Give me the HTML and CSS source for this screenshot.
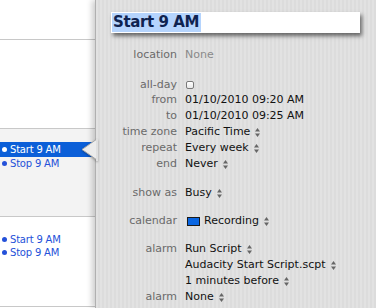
FILE: index.html
```html
<!DOCTYPE html>
<html>
<head>
<meta charset="utf-8">
<link rel="stylesheet" href="styles.css">
</head>
<body>
<div class="screen">
  <div class="cal">
    <div class="day day-a"></div>
    <div class="day day-b"></div>
    <div class="day day-c">
      <div class="ev ev-sel"><span class="dot"></span>Start 9 AM</div>
      <div class="ev"><span class="dot"></span>Stop 9 AM</div>
    </div>
    <div class="day day-d">
      <div class="ev"><span class="dot"></span>Start 9 AM</div>
      <div class="ev"><span class="dot"></span>Stop 9 AM</div>
    </div>
  </div>
  <div class="panel">
    <svg class="pointer" width="18" height="26" viewBox="0 0 18 26">
      <polygon points="17,0 2,10.5 17,21" fill="#ececec" stroke="#a9a9a9" stroke-width="1"/>
      <rect x="16" y="0" width="2" height="22" fill="#e0e0e0"/>
    </svg>
    <div class="title"><span class="sel">Start 9 AM</span></div>
    <div class="rows">
      <div class="row r-location"><span class="lab">location</span><span class="val none">None</span></div>
      <div class="row r-allday"><span class="lab">all-day</span><span class="val"><span class="check"></span></span></div>
      <div class="row"><span class="lab">from</span><span class="val">01/10/2010 09:20 AM</span></div>
      <div class="row"><span class="lab">to</span><span class="val">01/10/2010 09:25 AM</span></div>
      <div class="row"><span class="lab">time zone</span><span class="val">Pacific Time<svg class="pop" width="5" height="9" viewBox="0 0 5 9"><polygon points="0,3.5 2.5,0 5,3.5" fill="#666"/><polygon points="0,5.5 2.5,9 5,5.5" fill="#666"/></svg></span></div>
      <div class="row"><span class="lab">repeat</span><span class="val">Every week<svg class="pop" width="5" height="9" viewBox="0 0 5 9"><polygon points="0,3.5 2.5,0 5,3.5" fill="#666"/><polygon points="0,5.5 2.5,9 5,5.5" fill="#666"/></svg></span></div>
      <div class="row"><span class="lab">end</span><span class="val">Never<svg class="pop" width="5" height="9" viewBox="0 0 5 9"><polygon points="0,3.5 2.5,0 5,3.5" fill="#666"/><polygon points="0,5.5 2.5,9 5,5.5" fill="#666"/></svg></span></div>
      <div class="row r-showas"><span class="lab">show as</span><span class="val">Busy<svg class="pop" width="5" height="9" viewBox="0 0 5 9"><polygon points="0,3.5 2.5,0 5,3.5" fill="#666"/><polygon points="0,5.5 2.5,9 5,5.5" fill="#666"/></svg></span></div>
      <div class="row r-cal"><span class="lab">calendar</span><span class="val"><span class="swatch"></span>Recording<svg class="pop" width="5" height="9" viewBox="0 0 5 9"><polygon points="0,3.5 2.5,0 5,3.5" fill="#666"/><polygon points="0,5.5 2.5,9 5,5.5" fill="#666"/></svg></span></div>
      <div class="row r-alarm"><span class="lab">alarm</span><span class="val">Run Script<svg class="pop" width="5" height="9" viewBox="0 0 5 9"><polygon points="0,3.5 2.5,0 5,3.5" fill="#666"/><polygon points="0,5.5 2.5,9 5,5.5" fill="#666"/></svg></span></div>
      <div class="row"><span class="lab"></span><span class="val">Audacity Start Script.scpt<svg class="pop" width="5" height="9" viewBox="0 0 5 9"><polygon points="0,3.5 2.5,0 5,3.5" fill="#666"/><polygon points="0,5.5 2.5,9 5,5.5" fill="#666"/></svg></span></div>
      <div class="row"><span class="lab"></span><span class="val">1 minutes before<svg class="pop" width="5" height="9" viewBox="0 0 5 9"><polygon points="0,3.5 2.5,0 5,3.5" fill="#666"/><polygon points="0,5.5 2.5,9 5,5.5" fill="#666"/></svg></span></div>
      <div class="row"><span class="lab">alarm</span><span class="val">None<svg class="pop" width="5" height="9" viewBox="0 0 5 9"><polygon points="0,3.5 2.5,0 5,3.5" fill="#666"/><polygon points="0,5.5 2.5,9 5,5.5" fill="#666"/></svg></span></div>
    </div>
  </div>
</div>
</body>
</html>
```
FILE: styles.css
```css
html, body {
  margin: 0;
  padding: 0;
}
body {
  width: 376px;
  height: 308px;
  overflow: hidden;
  background: #fff;
  font-family: "DejaVu Sans", sans-serif;
}
.screen {
  display: flex;
  width: 376px;
  height: 308px;
}
.cal {
  width: 95px;
  flex: none;
  background: #fff;
}
.day {
  border-bottom: 1px solid #c8c8c8;
  box-sizing: border-box;
}
.day-a { height: 40px; }
.day-b { height: 89px; }
.day-c { height: 88px; background: #f3f3f3; padding-top: 13px; }
.day-d { height: 90px; padding-top: 16px; }
.ev {
  height: 13px;
  line-height: 13px;
  font-size: 10px;
  letter-spacing: -0.2px;
  color: #2451d9;
  white-space: nowrap;
  display: flex;
  align-items: center;
}
.ev .dot {
  width: 5px;
  height: 5px;
  border-radius: 50%;
  background: #2451d9;
  margin: 0 3px 0 2px;
  flex: none;
}
.ev-sel {
  height: 15px;
  line-height: 15px;
  background: #0b5fd8;
  color: #fff;
  margin-right: -6px;
}
.ev-sel .dot { background: #fff; }
.panel {
  flex: 1;
  position: relative;
  border-left: 1px solid #b0b0b0;
  box-shadow: -3px 0 6px rgba(0, 0, 0, 0.2);
  background: repeating-linear-gradient(90deg, #e2e2e2 0 2px, #dcdcdc 2px 4px);
  padding-top: 12px;
}
.pointer {
  position: absolute;
  left: -16px;
  top: 139px;
  filter: drop-shadow(0 1px 1px rgba(0, 0, 0, 0.3));
}
.title {
  margin-left: 15px;
  width: 249px;
  height: 21px;
  background: #fff;
  box-shadow: 2px 3px 4px rgba(0, 0, 0, 0.55);
  box-sizing: border-box;
  padding: 1px 0 1px 1px;
  display: flex;
}
.title .sel {
  background: #b5d4fd;
  color: #0f2350;
  font-weight: bold;
  font-size: 15px;
  letter-spacing: -0.4px;
  line-height: 19px;
  padding: 0 2px 0 1px;
}
.rows {
  margin-top: 14px;
  display: flex;
  flex-direction: column;
}
.row {
  display: flex;
  height: 16px;
  line-height: 16px;
  font-size: 11px;
  white-space: nowrap;
}
.lab {
  width: 81px;
  flex: none;
  text-align: right;
  color: #6a6a6a;
}
.val {
  margin-left: 8px;
  color: #111;
  display: flex;
  align-items: center;
}
.val.none { color: #8a8a8a; }
.r-location { margin-bottom: 14px; }
.r-allday { height: 15px; line-height: 15px; }
.r-showas { margin-top: 13px; }
.r-cal { margin-top: 12px; }
.r-alarm { margin-top: 12px; }
.check {
  width: 8px;
  height: 8px;
  box-sizing: border-box;
  border: 1px solid #7a7a7a;
  border-radius: 2px;
  background: linear-gradient(#ffffff, #e8e8e8);
  margin-left: 1px;
}
.swatch {
  width: 13px;
  height: 9px;
  box-sizing: border-box;
  border: 1px solid #1a1a1a;
  background: #0a66e2;
  margin: 0 4px 0 2px;
}
.pop {
  margin-left: 5px;
  flex: none;
}
```
